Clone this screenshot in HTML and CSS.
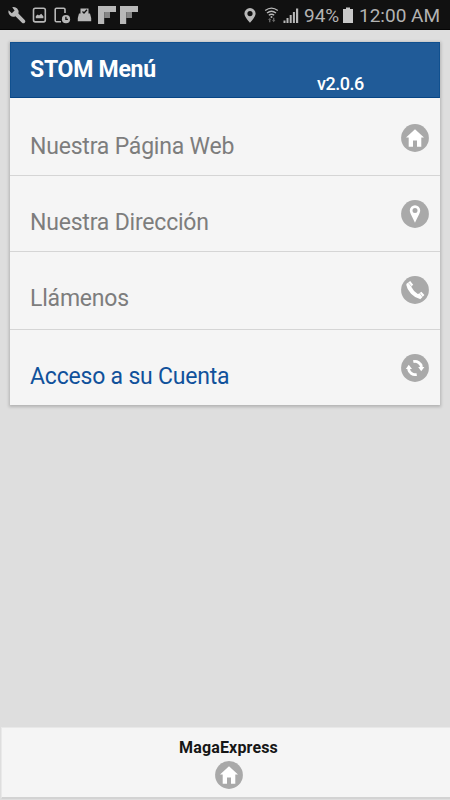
FILE: index.html
```html
<!DOCTYPE html>
<html lang="es">
<head>
<meta charset="utf-8">
<title>STOM Menú</title>
<link rel="stylesheet" href="styles.css">
</head>
<body>
<div class="screen">
  <header class="status">
    <svg class="tray" width="150" height="30" viewBox="0 0 150 30">
      <path d="M12.2 7.3a5 5 0 0 1 6.2 6.3l6.3 6.3a1.8 1.8 0 0 1-2.700 2.800l-6.500-6.500A5 5 0 0 1 8.600 10.300l3.200 3 2.800-2.700z"/>
      <rect class="line" x="33.500" y="8.300" width="11.800" height="13.600" rx="1.800"/>
      <path d="M35.800 18.200v-2.200l2-1.500 1.200.9 2.200-1.600 2.200 2.500v1.900z"/>
      <path class="line" d="M65 13V9.500a1.300 1.300 0 0 0-1.300-1.300H56.500a1.300 1.300 0 0 0-1.300 1.300V20.500a1.300 1.300 0 0 0 1.300 1.300H61"/>
      <circle cx="66" cy="19.200" r="4.100"/>
      <path class="cut" d="M65.900 16.800v2.600h2"/>
      <path d="M80.500 8.500h8v5h1.500l1.200 4.500v3.300h-13.400V18l1.200-4.500h1.500z"/>
      <path class="cut" d="M82.500 11.500l1.500 1.500 3-3.200"/>
      <path d="M98 6h18v6H98z"/><path d="M98 6h6.200v18H98z"/><path class="shade" d="M104.200 12h5.800v6h-5.800z"/>
      <path d="M120 6h18v6h-18z"/><path d="M120 6h6.200v18H120z"/><path class="shade" d="M126.200 12h5.800v6h-5.800z"/>
    </svg>
    <div class="system">
      <svg width="60" height="30" viewBox="0 0 60 30">
        <path fill-rule="evenodd" d="M10 8a5.600 5.600 0 0 0-5.600 5.600c0 3.600 5.600 9.200 5.600 9.200s5.600-5.600 5.600-9.200A5.600 5.600 0 0 0 10 8zm0 3a2.600 2.600 0 1 1 0 5.200A2.600 2.600 0 0 1 10 11z"/>
        <path class="wave" d="M25.200 10.500q6.300-4.800 12.600 0M27 13q4.500-3.400 9 0M28.800 15.200q2.700-2 5.400 0"/>
        <circle cx="31.500" cy="17" r="1"/>
        <path class="dim" d="M28 20l1.700-2 1.700 2h-1v2.200H29V20zM32 20h1v-2.200h1.400V20h1l-1.700 2.200z"/>
        <path d="M43.500 20.500h2V23h-2zM46.500 18h2v5h-2zM49.700 15h2v8h-2zM52.900 12h2v11h-2zM56 8.500h2.200V23H56z"/>
      </svg>
      <span class="percent">94%</span>
      <svg class="battery" width="10" height="30" viewBox="0 0 10 30"><path d="M0 9h3V7.500h4V9h3v14H0z"/></svg>
      <span class="clock">12:00 AM</span>
    </div>
  </header>

  <main class="card">
    <div class="title"><h1>STOM Menú</h1><span class="version">v2.0.6</span></div>
    <div class="row first"><span>Nuestra Página Web</span>
      <svg class="icon" viewBox="0 0 28 28"><circle cx="14" cy="14" r="13.900"/><path class="fg" d="M14 5.200l9 8.300h-2.700v9.200h-4.300v-6.200h-4v6.200H7.700v-9.200H5z"/></svg></div>
    <div class="row"><span>Nuestra Dirección</span>
      <svg class="icon" viewBox="0 0 28 28"><circle cx="14" cy="14" r="13.900"/><path class="fg" fill-rule="evenodd" d="M14 5.200a5.200 5.200 0 0 0-5.200 5.200c0 2.800 3.500 7.800 5.200 12.400 1.700-4.600 5.200-9.600 5.200-12.400A5.200 5.200 0 0 0 14 5.200zm0 2.700a2.500 2.500 0 1 1 0 5 2.500 2.500 0 0 1 0-5z"/></svg></div>
    <div class="row tall"><span>Llámenos</span>
      <svg class="icon" viewBox="0 0 28 28"><circle cx="14" cy="14" r="13.900"/><path class="handset" d="M7.200 8.200C8.200 14 13.500 19.800 20 21.300"/><path class="fg" d="M5.200 8l4-3 3 3.800-3.200 3zM16.800 18.300l3.600-2.600 3 3.300-3.800 4z"/><path class="crease" d="M7.300 6.500l3.200 4M18.500 17l3.200 4"/></svg></div>
    <div class="row account"><span>Acceso a su Cuenta</span>
      <svg class="icon" viewBox="0 0 28 28"><circle cx="14" cy="14" r="13.900"/><path class="arc" d="M12.300 7.700a6.600 6.600 0 0 1 8.200 5.300M15.700 20.300a6.600 6.600 0 0 1-8.200-5.300"/><path class="fg" d="M17.200 13h6.200l-3.200 4.200zM4.800 15h6.200L7.800 10.800z"/></svg></div>
  </main>

  <footer class="footer">
    <strong>MagaExpress</strong>
    <svg class="icon" viewBox="0 0 28 28"><circle cx="14" cy="14" r="13.900"/><path class="fg" d="M14 5.200l9 8.300h-2.700v9.200h-4.300v-6.200h-4v6.200H7.700v-9.200H5z"/></svg>
  </footer>
</div>
</body>
</html>
```
FILE: styles.css
```css
* { box-sizing: border-box; }
body { margin: 0; background: #dedede; font-family: Roboto, sans-serif; }
.screen { height: 800px; display: flex; flex-direction: column; }
.status { height: 30px; flex: none; background: #111; display: flex; justify-content: space-between; color: #b3b3b3; border-bottom: 1px solid #050505; }
.status svg { fill: #b8b8b8; flex: none; }
.status .line { fill: none; stroke: #b8b8b8; stroke-width: 1.6; }
.status .cut { fill: none; stroke: #111; stroke-width: 1.3; }
.status .shade { fill: #858585; }
.status .wave { fill: none; stroke: #b8b8b8; stroke-width: 1.4; }
.status .dim { fill: #666; }
.system { display: flex; width: 210px; font-size: 19px; line-height: 31px; white-space: nowrap; }
.percent { width: 39px; padding-left: 4px; }
.system .battery { fill: #c8c8c8; margin-left: 4px; }
.clock { margin-left: 6px; }

.card { flex: none; width: 430px; margin: 12px 10px 0; height: 363px; background: #f5f5f5; box-shadow: 0 1px 3px 1px rgba(0, 0, 0, .2); }
.title { height: 56px; background: #205b98; border: 1px solid #10508f; border-bottom-color: #074585; color: #fff; display: flex; align-items: flex-start; }
.title h1 { margin: 11px 0 0 19px; width: 287px; font-size: 23px; line-height: 32px; font-weight: 700; letter-spacing: -.25px; }
.version { margin-top: 30px; font-size: 18px; line-height: 22px; font-weight: 500; letter-spacing: -.5px; }
.row { height: 76px; padding: 0 11px 0 20px; display: flex; justify-content: space-between; border-bottom: 1px solid #d5d5d5; color: #7d7d7d; font-size: 23px; line-height: 32px; letter-spacing: -.2px; }
.row span { margin-top: 31px; }
.row .icon { margin-top: 24px; }
.row.first { height: 78px; }
.row.first span { margin-top: 33px; }
.row.first .icon { margin-top: 26px; }
.row.tall { height: 78px; }
.row.account { border: 0; color: #10519b; }
.row.account .icon { margin-top: 23.5px; }
.icon { width: 28px; height: 28px; fill: #a9a9a9; flex: none; }
.icon .fg { fill: #fff; }
.icon .handset { fill: none; stroke: #fff; stroke-width: 4.200; }
.icon .crease { stroke: #c4c4c4; stroke-width: .8; }
.icon .arc { fill: none; stroke: #fff; stroke-width: 2.800; }

.footer { height: 72px; margin: auto 0 1px 1px; background: #f5f5f5; border: 1px solid #e9e9e9; border-right: 0; border-bottom: 2px solid #d3d3d3; display: flex; flex-direction: column; align-items: center; padding: 9px 0 0 5px; }
.footer strong { color: #161616; font-size: 16px; line-height: 22px; letter-spacing: .15px; }
.footer .icon { margin-top: 2px; }
```
